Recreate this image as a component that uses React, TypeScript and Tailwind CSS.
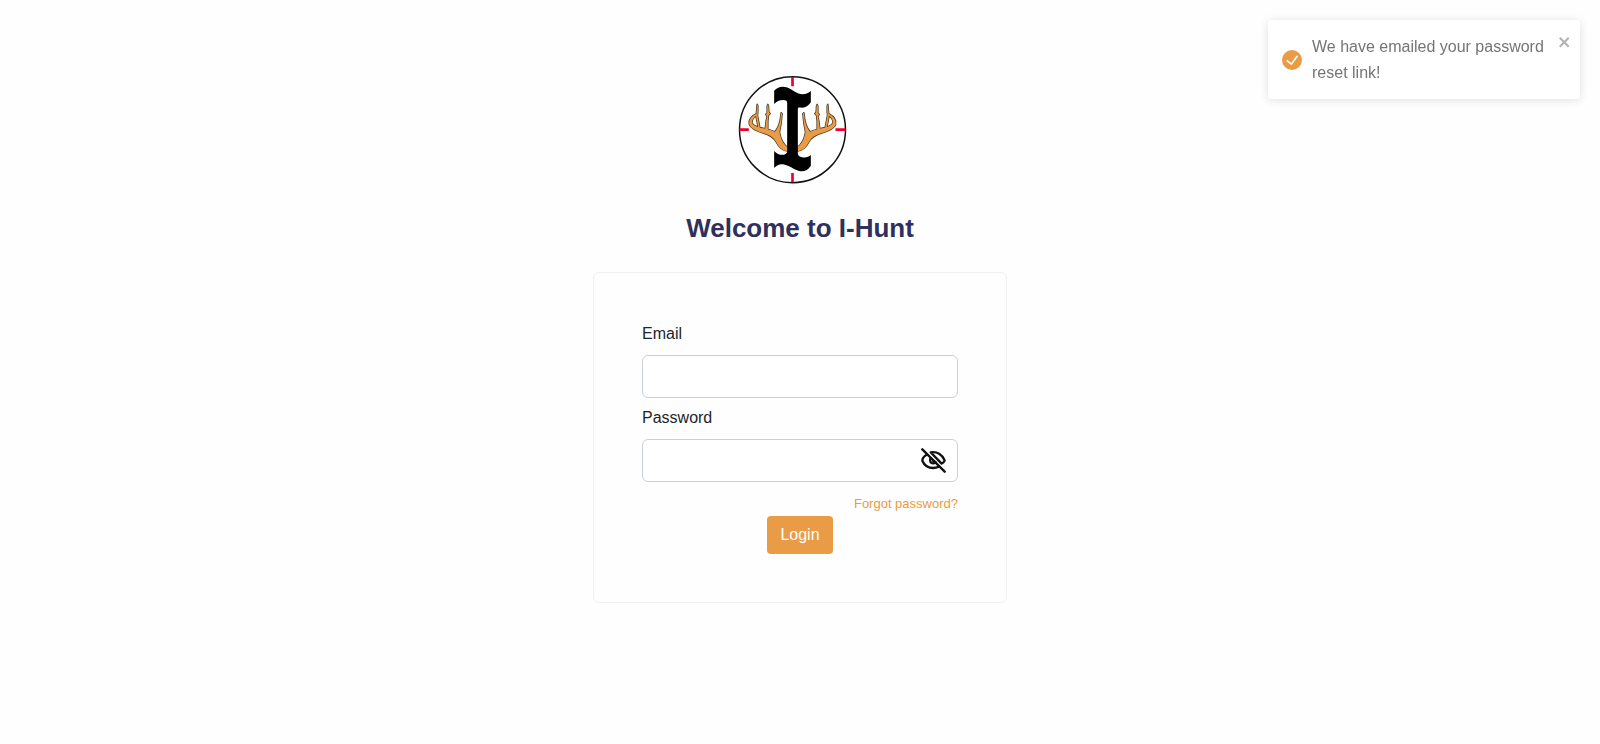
import React, { useState } from "react";

const ANTLER =
  "M175 250C155 248 146 236 139 222C131 208 118 200 100 195C85 190 63 182 59 170C55 156 66 144 79 137L81 141C72 148 65 157 67 165C70 173 85 178 100 181C120 186 128 187 134 192C143 184 148 170 151 156L154 134L157 137L154 165L149 192C152 210 160 230 175 238Z" +
  "M106 184L109 158L112 146L108 139L112 135L112 114L114 109L116 114L117 132L121 137L116 142L114 160L114 186Z" +
  "M82 109L84 113L84 132L83 142L90 179L85 178L79 148L80 130Z";

function Logo() {
  return (
    <svg viewBox="21.5 18 330 330" className="h-[110px] w-[110px]" role="img" aria-label="I-Hunt logo">
      <circle cx="188" cy="185" r="159" fill="#fff" stroke="#111" strokeWidth="4.5" />
      <path d="M188 27V55M188 315V343M29 185H57M317 185H347" stroke="#f00028" strokeWidth="8" />
      <g stroke="#4a3a28" strokeWidth="4.5" strokeLinejoin="round">
        <path d={ANTLER} />
        <path d={ANTLER} transform="matrix(-1 0 0 1 376 0)" />
      </g>
      <g fill="#e99b45">
        <path d={ANTLER} />
        <path d={ANTLER} transform="matrix(-1 0 0 1 376 0)" />
      </g>
      <path d="M133 68C143 57 157 54 170 58C186 63 202 79 218 79C229 79 237 74 243 69V103C237 112 227 120 215 119C208 118 204 118 204 122V256C204 263 209 267 217 268C228 270 237 267 243 261V293C235 306 222 312 208 309C192 305 176 291 159 289C148 288 140 293 133 300V249C142 259 153 262 163 260C169 258 172 255 172 250V104C172 98 167 96 160 96C148 96 141 100 133 108Z" />
    </svg>
  );
}

function EyeOffIcon() {
  return (
    <svg viewBox="0 0 75 75" className="h-[25px] w-[25px]" fill="none" stroke="#111" strokeWidth="7" strokeLinecap="round" strokeLinejoin="round">
      <path d="M17 20C10 24 4 32 4 38C10 52 22 60 37 60C43 60 49 58 54 56" />
      <path d="M29 13C48 9 64 20 71 37C69 42 66 46 62 47L31 15" />
      <path d="M28 32C25 39 29 46 36 46C39 46 41 45 43 43" />
      <path d="M36 38L44 43" />
      <path d="M4 4L71 71" />
    </svg>
  );
}

function Toast({ onClose }: { onClose: () => void }) {
  return (
    <div
      role="alert"
      className="fixed top-5 right-5 flex w-[312px] items-start rounded bg-white pt-[14px] pr-2 pb-[13px] pl-[14px] text-[#757575] shadow-[0_1px_10px_rgba(0,0,0,0.12)]"
    >
      <svg viewBox="0 0 24 24" className="mr-[10px] h-5 w-5 shrink-0 self-center" fill="#e99b45" aria-hidden="true">
        <path d="M12 0a12 12 0 1012 12A12.014 12.014 0 0012 0zm6.927 8.2l-6.845 9.289a1.011 1.011 0 01-1.43.188l-4.888-3.908a1 1 0 111.25-1.562l4.076 3.261 6.227-8.451a1 1 0 111.61 1.183z" />
      </svg>
      <p className="flex-1 leading-[26px]">We have emailed your password reset link!</p>
      <button type="button" aria-label="close" onClick={onClose} className="cursor-pointer text-[#b3b3b3]">
        <svg viewBox="0 0 14 16" className="h-4 w-[14px]" fill="currentColor" fillRule="evenodd">
          <path d="M7.71 8.23l3.75 3.75-1.48 1.48-3.75-3.75-3.75 3.75L1 11.98l3.75-3.75L1 4.48 2.48 3l3.75 3.75L9.98 3l1.48 1.48-3.75 3.75z" />
        </svg>
      </button>
    </div>
  );
}

const labelClass = "mb-[9px] block leading-[25px]";
const inputClass =
  "block h-[43px] w-full rounded-md border border-[#c9d0d6] bg-white px-3 outline-none focus:border-[#e99b45]";

export default function App() {
  const [toastOpen, setToastOpen] = useState(true);
  const [visible, setVisible] = useState(false);

  return (
    <main className="flex min-h-screen flex-col items-center bg-[#fefefe] px-4 pt-[74px] pb-10 font-['Liberation_Sans',Arial,sans-serif] text-base text-[#212529]">
      <div className="mb-7 pr-4">
        <Logo />
      </div>
      <h1 className="mb-[27px] text-[26px] leading-[33px] font-bold text-[#30305b]">Welcome to I-Hunt</h1>

      <form
        onSubmit={(e) => e.preventDefault()}
        className="flex w-full max-w-[414px] flex-col rounded-md border border-[#f0f0f0] bg-[#fefefe] p-12"
      >
        <div className="mb-[7px]">
          <label htmlFor="email" className={labelClass}>Email</label>
          <input id="email" type="email" className={inputClass} />
        </div>
        <div>
          <label htmlFor="password" className={labelClass}>Password</label>
          <div className="relative">
            <input id="password" type={visible ? "text" : "password"} className={`${inputClass} pr-12`} />
            <button
              type="button"
              aria-label="Show password"
              onClick={() => setVisible(!visible)}
              className="absolute inset-y-0 right-3 flex cursor-pointer items-center"
            >
              <EyeOffIcon />
            </button>
          </div>
        </div>
        <a href="#forgot" className="mt-3 mb-0.5 self-end text-[13px] leading-5 text-[#e99b45]">Forgot password?</a>
        <button type="submit" className="h-[38px] cursor-pointer self-center rounded bg-[#e99b45] px-[13px] text-white">
          Login
        </button>
      </form>

      {toastOpen && <Toast onClose={() => setToastOpen(false)} />}
    </main>
  );
}
